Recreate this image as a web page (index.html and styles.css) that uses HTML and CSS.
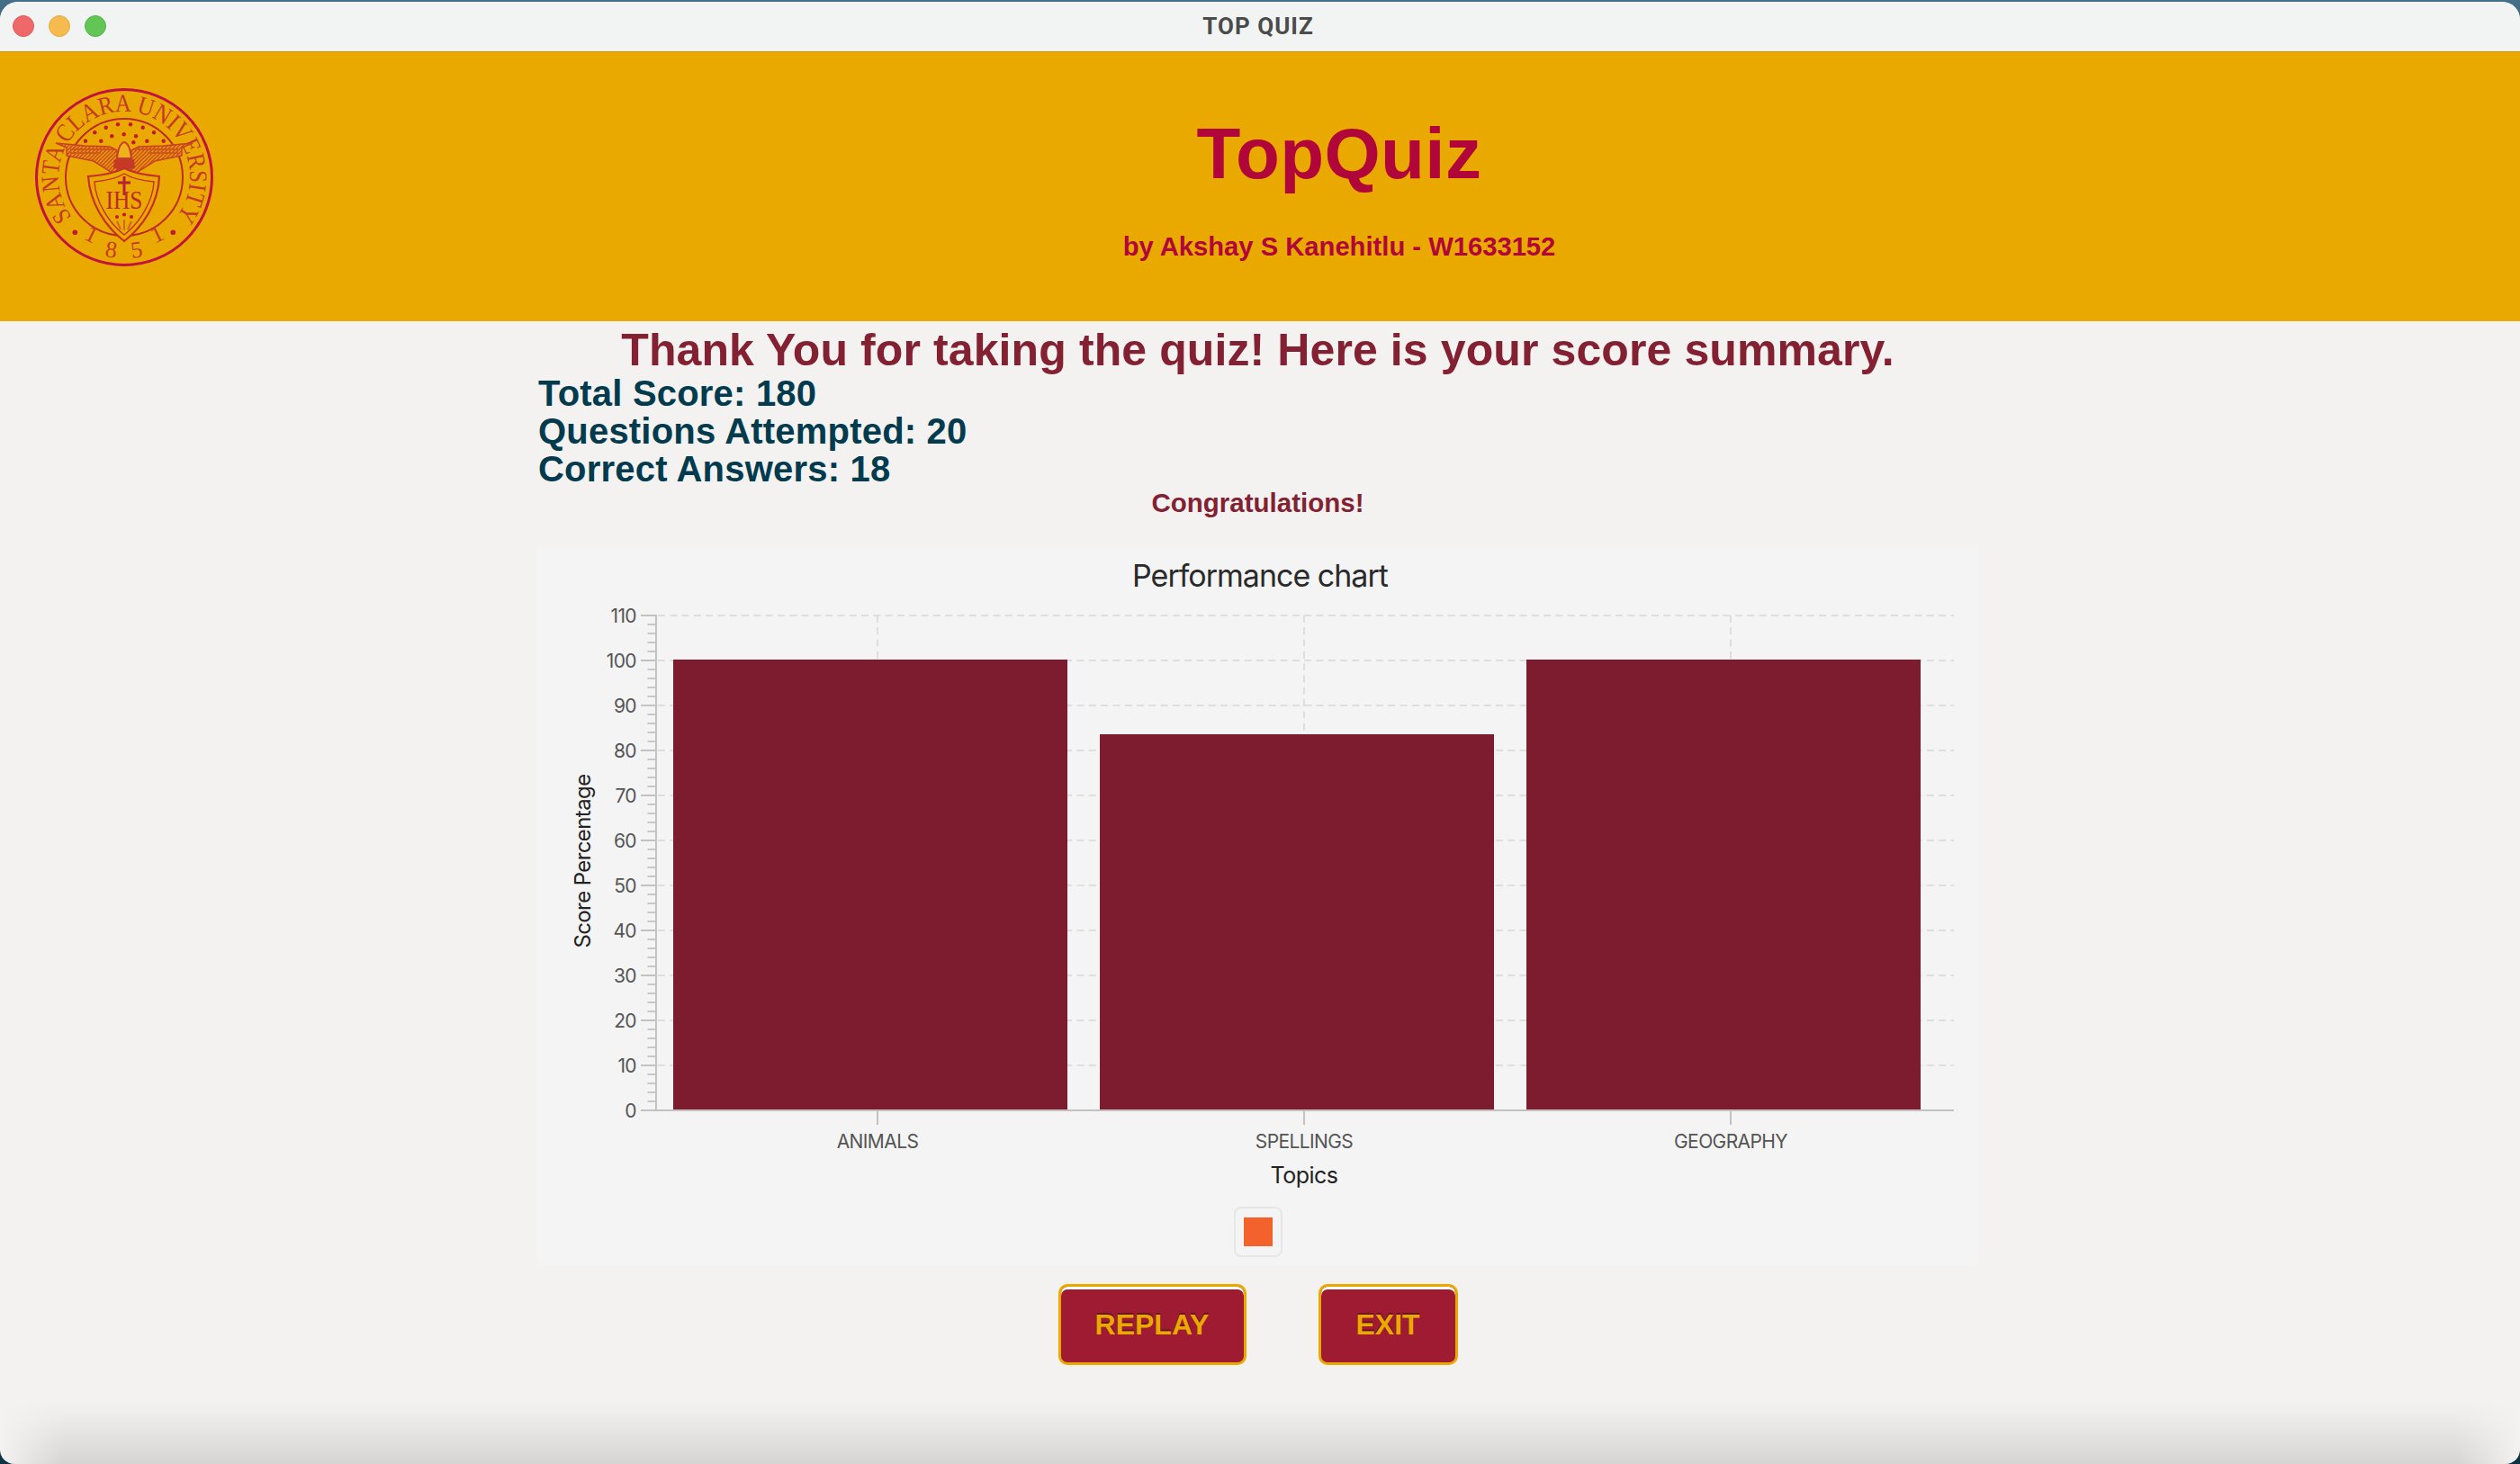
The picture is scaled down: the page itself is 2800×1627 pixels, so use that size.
FILE: index.html
```html
<!DOCTYPE html>
<html lang="en">
<head>
    <meta charset="UTF-8">
    <title>TOP QUIZ</title>
    <link rel="stylesheet" href="styles.css">
</head>
<body>
<div class="window">
    <div class="titlebar">
        <div class="lights">
            <span class="light red"></span>
            <span class="light yellow"></span>
            <span class="light green"></span>
        </div>
        <div class="window-title">TOP QUIZ</div>
    </div>

    <header class="banner">
        <svg class="seal" viewBox="0 0 200 200" width="200" height="200">
            <defs>
                <path id="sealArc" d="M 48.4 151.6 A 73 73 0 1 1 151.6 151.6"/>
                <pattern id="feathers" width="3" height="3" patternUnits="userSpaceOnUse" patternTransform="rotate(45)">
                    <rect width="3" height="3" fill="#eaa900"/>
                    <rect width="1.5" height="3" fill="#c9402a"/>
                </pattern>
            </defs>
            <circle class="ring" cx="100" cy="100" r="97.5"/>
            <circle class="ring-thin" cx="100" cy="100" r="65"/>

            <text class="seal-text"><textPath href="#sealArc" startOffset="50%" text-anchor="middle" textLength="324" lengthAdjust="spacingAndGlyphs">SANTA CLARA UNIVERSITY</textPath></text>

            <text class="seal-year" text-anchor="middle" transform="translate(60 171) rotate(26)">1</text>
            <text class="seal-year" text-anchor="middle" transform="translate(84.5 189) rotate(8)">8</text>
            <text class="seal-year" text-anchor="middle" transform="translate(115 189) rotate(-8)">5</text>
            <text class="seal-year" text-anchor="middle" transform="translate(140 171) rotate(-26)">1</text>
            <g class="dots">
                <circle cx="45.3" cy="161.3" r="2.8"/><circle cx="154.3" cy="161.3" r="2.8"/>
                <circle cx="79.7" cy="44.7" r="2.2"/><circle cx="93" cy="41.3" r="2.2"/><circle cx="107" cy="41.3" r="2.2"/><circle cx="120.7" cy="44.7" r="2.2"/><circle cx="133" cy="50.3" r="2.2"/><circle cx="67.3" cy="50.3" r="2.2"/>
                <circle cx="86.3" cy="54.3" r="2.2"/><circle cx="99.7" cy="52.3" r="2.2"/><circle cx="113" cy="54.3" r="2.2"/>
                <circle cx="57" cy="59.7" r="2.2"/><circle cx="74.3" cy="59.7" r="2.2"/><circle cx="110.3" cy="61.3" r="2.2"/><circle cx="125.3" cy="59.7" r="2.2"/><circle cx="143.7" cy="59.7" r="2.2"/>
            </g>

            <!-- eagle -->
            <path class="wing" d="M24 62 L56 65 L84 66 L92 70 L93 94 L88 96 L66 82 L36 76 L36 67 Z"/>
            <path class="wing" d="M176 62 L144 65 L116 66 L108 70 L107 94 L112 96 L134 82 L164 76 L164 67 Z"/>
            <path class="eagle-band" d="M40 69 H88 M40 73 H74 M160 69 H112 M160 73 H126"/>
            <path class="eagle-head" d="M92 79 C93 70 95 62 100 61 C105 62 107 70 108 79 Z"/>
            <path class="eagle-body" d="M89 80 H111 L112 90 L100 92 L88 90 Z"/>

            <!-- shield -->
            <path class="shield" d="M60 99 C74 98 90 95 100 90 C110 95 126 98 139 99 C138 128 122 154 100 171 C78 154 62 128 60 99 Z"/>
            <path class="shield-in" d="M67 105 C78 104 92 101 100 96 C108 101 122 104 133 105 C132 126 118 150 100 164 C82 150 68 126 67 105 Z"/>
            <path class="cross" d="M100 99 V120 M93 106 H107"/>
            <text class="ihs" x="100" y="135" text-anchor="middle" textLength="41" lengthAdjust="spacingAndGlyphs">IHS</text>
            <g class="dots">
                <circle cx="92" cy="144" r="2.1"/><circle cx="100" cy="141.5" r="2.1"/><circle cx="108" cy="144" r="2.1"/>
            </g>
            <path class="nails" d="M92 149 L96 158 M100 147 V159 M108 149 L104 158"/>
        </svg>
        <div class="banner-text">
            <h1>TopQuiz</h1>
            <p>by Akshay S Kanehitlu - W1633152</p>
        </div>
    </header>

    <main class="summary">
        <h2>Thank You for taking the quiz! Here is your score summary.</h2>
        <div class="scores">
            <div>Total Score: 180</div>
            <div>Questions Attempted: 20</div>
            <div>Correct Answers: 18</div>
        </div>
        <div class="congrats">Congratulations!</div>

        <section class="chart-panel">
            <svg class="chart" viewBox="0 0 1601 800" width="1601" height="800">
                <text class="chart-title" x="803" y="46" text-anchor="middle">Performance chart</text>

                <!-- grid -->
                <g class="grid">
                    <line x1="134" x2="1574" y1="78" y2="78"/>
                    <line x1="134" x2="1574" y1="128" y2="128"/>
                    <line x1="134" x2="1574" y1="178" y2="178"/>
                    <line x1="134" x2="1574" y1="228" y2="228"/>
                    <line x1="134" x2="1574" y1="278" y2="278"/>
                    <line x1="134" x2="1574" y1="328" y2="328"/>
                    <line x1="134" x2="1574" y1="378" y2="378"/>
                    <line x1="134" x2="1574" y1="428" y2="428"/>
                    <line x1="134" x2="1574" y1="478" y2="478"/>
                    <line x1="134" x2="1574" y1="528" y2="528"/>
                    <line x1="134" x2="1574" y1="578" y2="578"/>
                    <line x1="378" x2="378" y1="78" y2="628"/>
                    <line x1="852" x2="852" y1="78" y2="628"/>
                    <line x1="1326" x2="1326" y1="78" y2="628"/>
                </g>

                <!-- bars -->
                <rect class="bar" x="151" y="127" width="438" height="501"/>
                <rect class="bar" x="625" y="210" width="438" height="418"/>
                <rect class="bar" x="1099" y="127" width="438" height="501"/>

                <!-- y axis -->
                <line class="axis" x1="132" x2="132" y1="77" y2="629"/>
                <line class="minor" x1="127" x2="127" y1="78" y2="628"/>
                <g class="axis-ticks">
                    <line x1="115" x2="132" y1="78" y2="78"/>
                    <line x1="115" x2="132" y1="128" y2="128"/>
                    <line x1="115" x2="132" y1="178" y2="178"/>
                    <line x1="115" x2="132" y1="228" y2="228"/>
                    <line x1="115" x2="132" y1="278" y2="278"/>
                    <line x1="115" x2="132" y1="328" y2="328"/>
                    <line x1="115" x2="132" y1="378" y2="378"/>
                    <line x1="115" x2="132" y1="428" y2="428"/>
                    <line x1="115" x2="132" y1="478" y2="478"/>
                    <line x1="115" x2="132" y1="528" y2="528"/>
                    <line x1="115" x2="132" y1="578" y2="578"/>
                    <line x1="115" x2="132" y1="628" y2="628"/>
                </g>
                <g class="tick-label" text-anchor="end">
                    <text x="110" y="86">110</text>
                    <text x="110" y="136">100</text>
                    <text x="110" y="186">90</text>
                    <text x="110" y="236">80</text>
                    <text x="110" y="286">70</text>
                    <text x="110" y="336">60</text>
                    <text x="110" y="386">50</text>
                    <text x="110" y="436">40</text>
                    <text x="110" y="486">30</text>
                    <text x="110" y="536">20</text>
                    <text x="110" y="586">10</text>
                    <text x="110" y="636">0</text>
                </g>
                <text class="axis-label y-label" text-anchor="middle" transform="translate(59 351) rotate(-90)">Score Percentage</text>

                <!-- x axis -->
                <line class="axis" x1="115" x2="1574" y1="628" y2="628"/>
                <g class="axis-ticks">
                    <line x1="378" x2="378" y1="628" y2="644"/>
                    <line x1="852" x2="852" y1="628" y2="644"/>
                    <line x1="1326" x2="1326" y1="628" y2="644"/>
                </g>
                <g class="tick-label" text-anchor="middle">
                    <text x="378" y="670">ANIMALS</text>
                    <text x="852" y="670">SPELLINGS</text>
                    <text x="1326" y="670">GEOGRAPHY</text>
                </g>
                <text class="axis-label" x="852" y="709" text-anchor="middle">Topics</text>
            </svg>
            <div class="legend"><span class="swatch"></span></div>
        </section>

        <div class="actions">
            <button class="btn btn-replay">REPLAY</button>
            <button class="btn btn-exit">EXIT</button>
        </div>
    </main>
    <div class="window-shade"></div>
</div>
</body>
</html>
```

FILE: styles.css
```css
html, body {
    margin: 0;
    padding: 0;
}
body {
    width: 2800px;
    height: 1627px;
    overflow: hidden;
    font-family: "Liberation Sans", Arial, sans-serif;
    background: linear-gradient(#46708a, #2c5a72 60px, #0d3345 1560px);
}
.window {
    position: relative;
    display: flex;
    flex-direction: column;
    width: 2800px;
    height: 1625px;
    margin-top: 2px;
    background: #f3f2f1;
    border-radius: 20px 20px 16px 16px;
    overflow: hidden;
}

/* title bar */
.titlebar {
    position: relative;
    display: flex;
    align-items: center;
    justify-content: center;
    height: 55px;
    flex-shrink: 0;
    background: #f2f4f3;
}
.lights {
    position: absolute;
    left: 14px;
    top: 15px;
    display: flex;
    gap: 16px;
}
.light {
    width: 24px;
    height: 24px;
    border-radius: 50%;
    box-sizing: border-box;
}
.red {
    background: #f0696a;
    border: 1px solid #dd5a5a;
}
.yellow {
    background: #f5bb4f;
    border: 1px solid #e3a940;
}
.green {
    background: #62c655;
    border: 1px solid #55b04a;
}
.window-title {
    margin: -2px 4px 0 0;
    font-family: Roboto, sans-serif;
    font-weight: 700;
    font-size: 26px;
    letter-spacing: 1px;
    color: #4a4b4b;
}

/* banner */
.banner {
    display: flex;
    align-items: flex-start;
    height: 300px;
    flex-shrink: 0;
    box-sizing: border-box;
    padding: 39px 0 0 38px;
    background: #eaa900;
    border-top: 1px solid #c99200;
}
.seal {
    flex-shrink: 0;
}
.ring {
    fill: none;
    stroke: #c2123f;
    stroke-width: 3;
}
.ring-thin {
    fill: none;
    stroke: #bd2a2c;
    stroke-width: 2;
}
.seal-text {
    font-family: "Liberation Serif", serif;
    font-size: 28px;
    fill: #c4392a;
}
.seal-year {
    font-family: "Liberation Serif", serif;
    font-size: 26px;
    fill: #c4392a;
}
.dots circle {
    fill: #c4183a;
}
.wing {
    fill: url(#feathers);
    stroke: #c9402a;
    stroke-width: 1.5;
}
.eagle-band {
    fill: none;
    stroke: #d0581e;
    stroke-width: 2;
}
.eagle-head {
    fill: #eeb21c;
    stroke: #c9402a;
    stroke-width: 2;
}
.eagle-body {
    fill: #c43a26;
}
.shield, .shield-in {
    fill: #eaa900;
    stroke: #c4302c;
    stroke-width: 2.2;
}
.shield-in {
    stroke-width: 1.4;
}
.cross {
    fill: none;
    stroke: #b81f3a;
    stroke-width: 3;
}
.ihs {
    font-family: "Liberation Serif", serif;
    font-size: 29px;
    fill: #bd2a2c;
}
.nails {
    fill: none;
    stroke: #d0681e;
    stroke-width: 2;
}
.banner-text {
    flex: 1;
    padding-right: 62px;
    text-align: center;
    color: #b1063a;
}
.banner-text h1 {
    margin: 0;
    padding-top: 19px;
    font-size: 80px;
    line-height: 110px;
    letter-spacing: 0.4px;
}
.banner-text p {
    margin: 30px 0 0;
    font-size: 29.2px;
    font-weight: 700;
    line-height: 36px;
}

/* summary */
.summary {
    display: flex;
    flex-direction: column;
    align-items: center;
    width: 1601px;
    margin-left: 597px;
}
.summary h2 {
    margin: 5px 0 0;
    font-size: 50px;
    line-height: 54px;
    letter-spacing: 0.1px;
    white-space: nowrap;
    color: #832132;
}
.scores {
    align-self: flex-start;
    margin-left: 1px;
    font-size: 40px;
    font-weight: 700;
    line-height: 42px;
    letter-spacing: 0.2px;
    color: #023a4e;
}
.congrats {
    font-size: 29.5px;
    font-weight: 700;
    line-height: 34px;
    color: #832132;
}

/* chart */
.chart-panel {
    position: relative;
    width: 1601px;
    height: 800px;
    margin-top: 30px;
    background: #f4f4f4;
}
.chart {
    display: block;
    font-family: Inter, sans-serif;
}
.chart-title {
    font-size: 34px;
    letter-spacing: -1px;
    fill: #2a2a2a;
}
.grid line {
    stroke: #dedede;
    stroke-width: 2;
    stroke-dasharray: 8 5.3;
}
.bar {
    fill: #7d1c2e;
}
.axis, .axis-ticks line {
    stroke: #c2c2c2;
    stroke-width: 2;
}
.minor {
    stroke: #c8c8c8;
    stroke-width: 9;
    stroke-dasharray: 2 8;
    stroke-dashoffset: 1;
}
.tick-label {
    font-size: 21px;
    letter-spacing: -0.6px;
    fill: #555;
}
.axis-label {
    font-size: 25px;
    letter-spacing: -0.5px;
    fill: #222;
}
.y-label {
    font-size: 24px;
    letter-spacing: -0.6px;
}
.legend {
    position: absolute;
    left: 774px;
    top: 735px;
    display: flex;
    align-items: center;
    justify-content: center;
    width: 54px;
    height: 56px;
    box-sizing: border-box;
    background: #f4f4f4;
    border: 2px solid #e6e6e6;
    border-radius: 8px;
}
.swatch {
    width: 32px;
    height: 32px;
    background: #f3622d;
}

/* buttons */
.actions {
    display: flex;
    justify-content: center;
    gap: 80px;
    margin-top: 21px;
}
.btn {
    height: 90px;
    padding: 0;
    box-sizing: border-box;
    font-family: "Liberation Sans", Arial, sans-serif;
    font-size: 32px;
    font-weight: 700;
    color: #eaa900;
    text-shadow: 0 -2px 0 #6a1226;
    background: #9f1b32;
    border: 3px solid #eaa900;
    border-radius: 10px;
    box-shadow: inset 0 3px 0 #fff;
}
.btn-replay {
    width: 209px;
}
.btn-exit {
    width: 155px;
}

.window-shade {
    position: absolute;
    left: 0;
    right: 0;
    bottom: 0;
    height: 72px;
    pointer-events: none;
    background: linear-gradient(rgba(0, 0, 0, 0), rgba(0, 0, 0, 0.03) 35%, rgba(0, 0, 0, 0.12));
    -webkit-mask-image: linear-gradient(90deg, transparent, #000 70px, #000 2730px, transparent);
    mask-image: linear-gradient(90deg, transparent, #000 70px, #000 2730px, transparent);
}
```
